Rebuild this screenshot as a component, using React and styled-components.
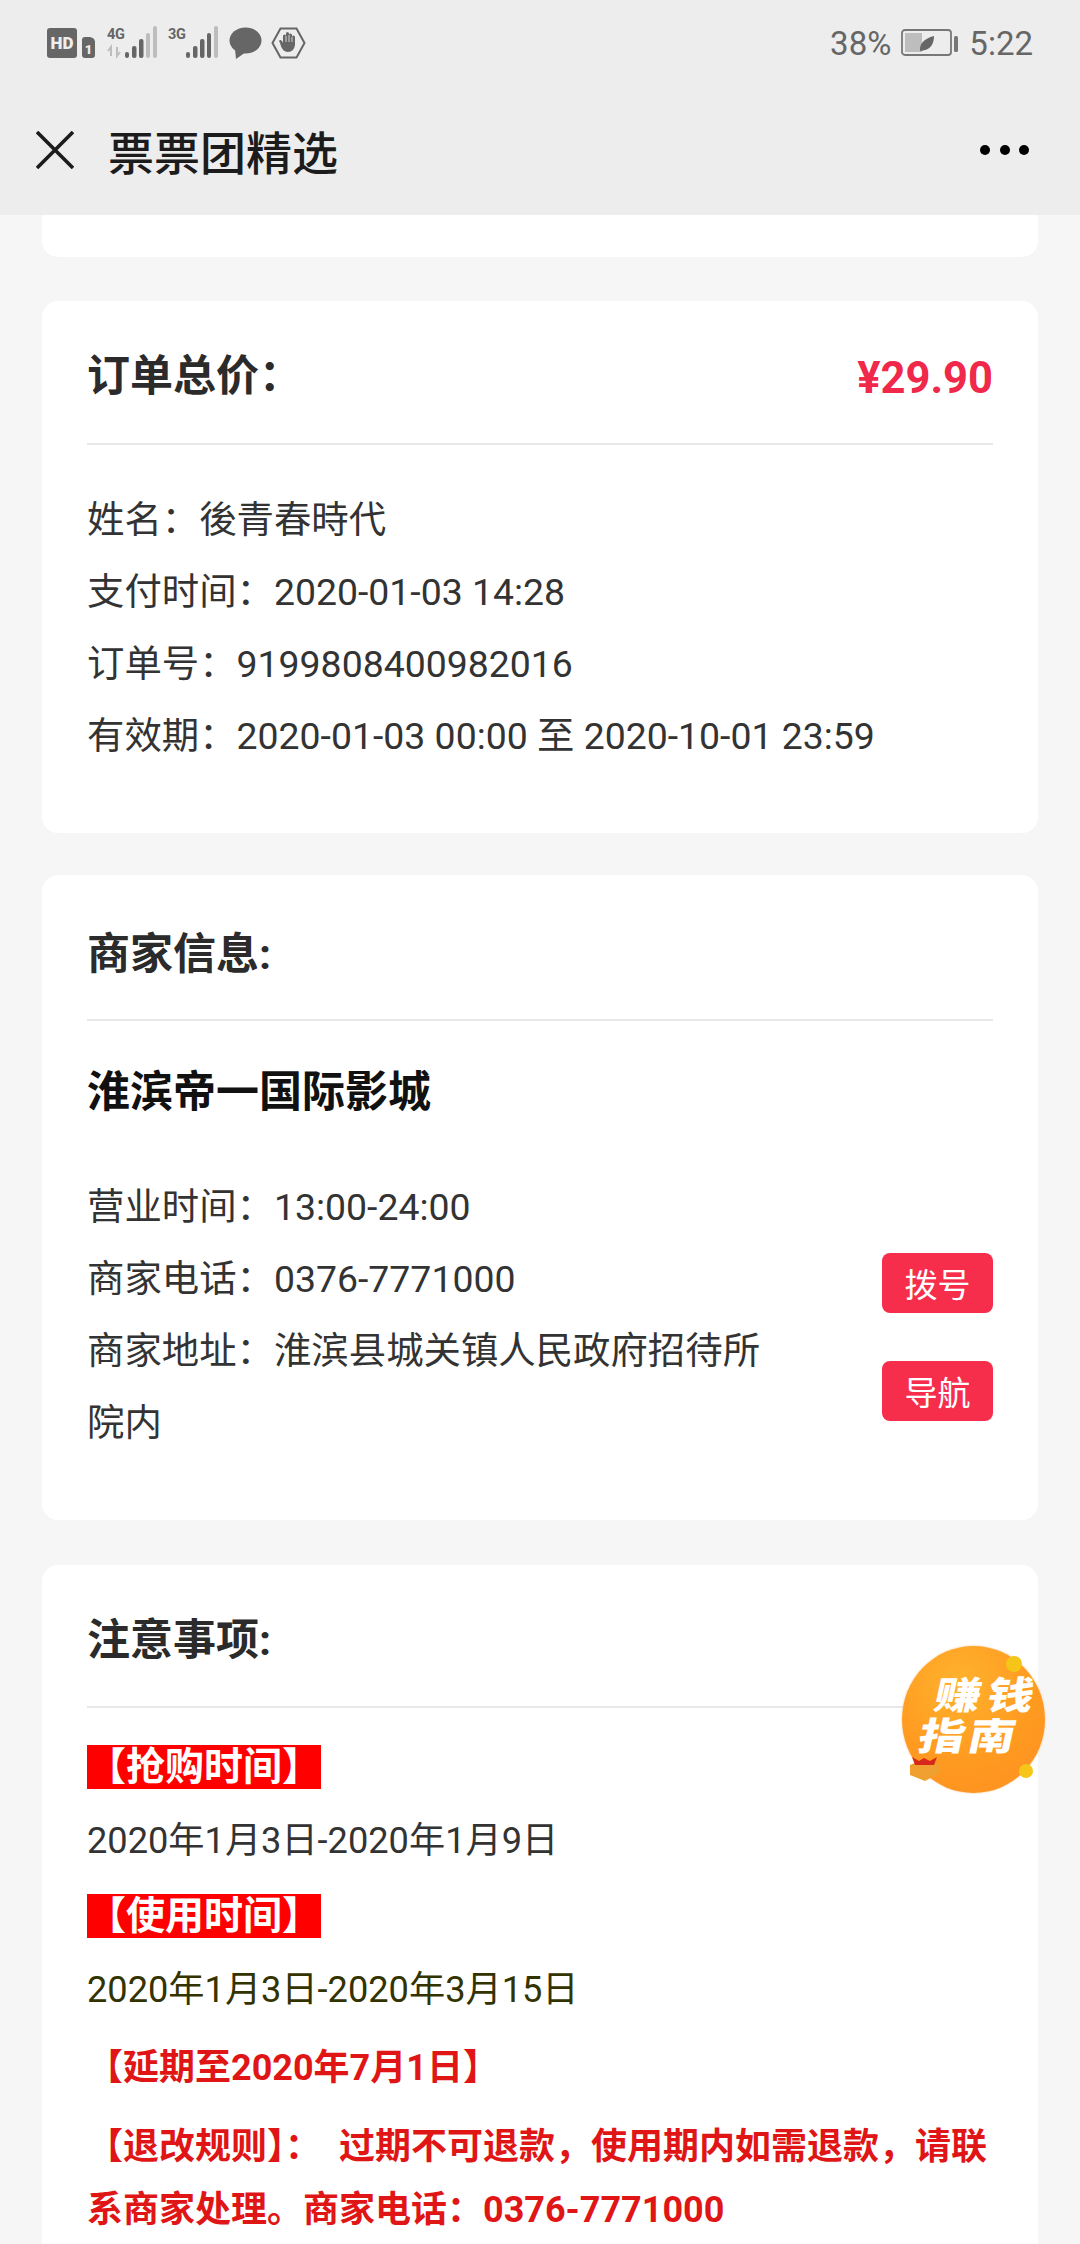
import React from 'react';
import styled, { createGlobalStyle } from 'styled-components';

const Global = createGlobalStyle`
  html, body { margin: 0; padding: 0; background: #f6f6f6; }
  body { font-family: Roboto, "Noto Sans CJK SC", sans-serif; }
  #root { height: 2244px; overflow: hidden; }
`;
const Page = styled.div`
  position: relative;
  width: 1080px;
  height: 2244px;
  overflow: hidden;
  background: #f6f6f6;
`;
const Header = styled.header`
  height: 215px;
  background: #ededed;
  display: flex;
  flex-direction: column;
`;
const StatusBar = styled.div`
  height: 86px;
  display: flex;
  align-items: center;
  justify-content: space-between;
  padding: 0 47px 0 47px;
  color: #666;
  font-size: 33px;
`;
const StatusGroup = styled.div`
  display: flex;
  align-items: center;
  gap: ${p => p.$gap || 8}px;
`;
const Nav = styled.div`
  flex: 1;
  display: flex;
  align-items: center;
  padding: 0 0 1px 36px;
`;
const NavTitle = styled.div`
  margin-left: 34px;
  font-size: 46px;
  font-weight: 500;
  color: #1c1c1c;
  flex: 1;
`;
const Dots = styled.div`
  display: flex;
  gap: 9.5px;
  margin-right: 51px;
  span { width: 10px; height: 10px; border-radius: 50%; background: #000; }
`;
const Content = styled.main`
  display: flex;
  flex-direction: column;
  padding: 0 42px;
`;
const Card = styled.section`
  background: #fff;
  border-radius: 16px;
  margin-top: ${p => p.$mt || 0}px;
  padding: 0 45px ${p => p.$pb ?? 60}px;
  ${p => p.$stub && 'border-top-left-radius: 0; border-top-right-radius: 0; height: 42px; padding: 0;'}
`;
const CardHead = styled.div`
  height: ${p => p.$h}px;
  box-sizing: border-box;
  padding-top: ${p => p.$pt || 0}px;
  display: flex;
  align-items: center;
  justify-content: space-between;
  border-bottom: 2px solid #e8e8e8;
`;
const CardTitle = styled.h2`
  margin: 0;
  font-size: 43px;
  font-weight: 700;
  color: #2b2b2b;
`;
const Price = styled.div`
  margin-top: 12px;
  font-size: 43.5px;
  font-weight: 700;
  color: #f0284a;
`;
const Rows = styled.div`
  margin-top: ${p => p.$mt}px;
`;
const Row = styled.div`
  display: flex;
  justify-content: space-between;
  align-items: center;
  font-size: 37.4px;
  line-height: 72px;
  color: #333;
`;
const Address = styled.div`
  width: 690px;
`;
const ShopName = styled.h3`
  margin: 41px 0 0;
  font-size: 43px;
  line-height: 60px;
  font-weight: 700;
  color: #111;
`;
const ActionButton = styled.button`
  width: 111px;
  height: 60px;
  margin-top: 8px;
  border: 0;
  border-radius: 8px;
  background: #f72d4c;
  color: #fff;
  font: 400 33px Roboto, "Noto Sans CJK SC", sans-serif;
  padding: 0;
`;
const Notes = styled.div`
  padding-top: 37px;
`;
const RedTag = styled.div`
  width: 234px;
  height: 44px;
  background: #ff0000;
  color: #fff;
  font-size: 39px;
  line-height: 44px;
  font-weight: 700;
  white-space: nowrap;
`;
const DateLine = styled.div`
  margin: 28px 0 29px;
  font-size: 36.2px;
  line-height: 48px;
  font-weight: 400;
  color: ${p => p.$color || '#333'};
`;
const Alert = styled.p`
  margin: ${p => p.$mt}px 0 0;
  font-size: 36px;
  line-height: 63px;
  font-weight: 700;
  color: #e01515;
`;
const Badge = styled.div`
  position: absolute;
  left: 902px;
  top: 1646px;
  width: 143px;
  height: 147px;
  border-radius: 50%;
  background: radial-gradient(circle at 40% 25%, #ffb22e 0%, #ff9a20 55%, #fd8f22 100%);
  box-shadow: 0 0 2px #ffb777;
`;
const BadgeText = styled.div`
  position: absolute;
  left: ${p => p.$x}px;
  top: ${p => p.$y}px;
  font-size: 38px;
  line-height: 42px;
  font-weight: 900;
  letter-spacing: ${p => p.$ls || 0}px;
  color: #fff;
  white-space: nowrap;
  transform-origin: left center;
  transform: scaleX(1.22) skewX(-10deg);
`;
const BadgeDecor = styled.svg`
  position: absolute;
  left: -8px;
  top: -16px;
  overflow: visible;
`;

const HdIcon = () => (
  <svg width="51" height="32" viewBox="0 0 51 32">
    <rect x="0" y="1" width="30" height="30" rx="3" fill="#666" />
    <text x="15" y="22" textAnchor="middle" fontFamily="Roboto, sans-serif" fontSize="17" fontWeight="900" fill="#eee">HD</text>
    <path d="M35 13q0-3 3-3h5q5 1 5 5v13q0 3-3 3h-7q-3 0-3-3z" fill="#666" />
    <text x="41.5" y="27" textAnchor="middle" fontFamily="Roboto, sans-serif" fontSize="13" fontWeight="900" fill="#eee">1</text>
  </svg>
);
const Signal = ({ label, arrows, full }) => (
  <svg width="52" height="34" viewBox="0 0 52 34">
    <text x="0" y="13" fontFamily="Roboto, sans-serif" fontSize="14.5" fontWeight="700" fill="#666" textLength="18">{label}</text>
    {arrows && <path d="M4 30V21l-3 4M10 21v9l3-4" fill="none" stroke="#bdbdbd" strokeWidth="2" />}
    <rect x="18" y="26" width="4" height="6" rx="2" fill="#666" />
    <rect x="25" y="20" width="4.5" height="12" rx="2" fill="#666" />
    <rect x="32" y="13" width="4.5" height="19" rx="2" fill="#666" />
    <rect x="39" y="7" width="4" height="25" rx="2" fill={full ? '#666' : '#bdbdbd'} />
    <rect x="46" y="0" width="4" height="32" rx="2" fill="#bdbdbd" />
  </svg>
);
const Bubble = () => (
  <svg width="33" height="32" viewBox="0 0 33 32">
    <ellipse cx="16.5" cy="13.5" rx="16" ry="13" fill="#666" />
    <path d="M6 22l1 10 10-7z" fill="#666" />
  </svg>
);
const StopHand = () => (
  <svg width="35" height="32" viewBox="0 0 35 32">
    <path d="M1.5 16 9.5 1.5h16l8 14.5-8 14.5h-16z" fill="none" stroke="#666" strokeWidth="2" />
    <path d="M9 16l-1-2q1-2 3 0l1 2V9q0-1.5 1.5-1.5T15 9V6.500q0-1.500 1.500-1.500T18 6.500V8q0-1.500 1.500-1.500T21 8v2q0-1.500 1.500-1.500T24 10v8q-1 7-7 7t-8-9z" fill="#666" />
    <path d="M15 9v6M18 8v7M21 10v5" stroke="#ededed" strokeWidth=".8" fill="none" />
  </svg>
);
const Battery = () => (
  <svg width="58" height="28" viewBox="0 0 58 28">
    <rect x="1" y="1" width="49" height="25" rx="3" fill="none" stroke="#777" strokeWidth="1.8" />
    <rect x="4" y="4" width="17" height="19" fill="#bdbdbd" />
    <path d="M19 22q-1-11 14-15q0 14-14 15z" fill="#666" />
    <rect x="53" y="7" width="4" height="16" rx="1.500" fill="#777" />
  </svg>
);
const CloseIcon = () => (
  <svg width="38" height="38" viewBox="0 0 38 38">
    <path d="M1 1l36 36M37 1L1 37" stroke="#1c1c1c" strokeWidth="3.6" fill="none" />
  </svg>
);

export default function App() {
  return (
    <Page>
      <Global />
      <Header>
        <StatusBar>
          <StatusGroup $gap={9}>
            <HdIcon />
            <Signal label="4G" arrows />
            <Signal label="3G" full />
            <Bubble />
            <StopHand />
          </StatusGroup>
          <StatusGroup $gap={10}>
            <span>38%</span>
            <Battery />
            <span>5:22</span>
          </StatusGroup>
        </StatusBar>
        <Nav>
          <CloseIcon />
          <NavTitle>票票团精选</NavTitle>
          <Dots><span /><span /><span /></Dots>
        </Nav>
      </Header>
      <Content>
        <Card $stub />
        <Card $mt={44} $pb={61}>
          <CardHead $h={144}>
            <CardTitle>订单总价：</CardTitle>
            <Price>¥29.90</Price>
          </CardHead>
          <Rows $mt={39}>
            <Row>姓名：後青春時代</Row>
            <Row>支付时间：2020-01-03 14:28</Row>
            <Row>订单号：9199808400982016</Row>
            <Row>有效期：2020-01-03 00:00 至 2020-10-01 23:59</Row>
          </Rows>
        </Card>
        <Card $mt={42} $pb={61}>
          <CardHead $h={146} $pt={5}>
            <CardTitle>商家信息:</CardTitle>
          </CardHead>
          <ShopName>淮滨帝一国际影城</ShopName>
          <Rows $mt={49}>
            <Row>营业时间：13:00-24:00</Row>
            <Row>
              <span>商家电话：0376-7771000</span>
              <ActionButton>拨号</ActionButton>
            </Row>
            <Row>
              <Address>商家地址：淮滨县城关镇人民政府招待所院内</Address>
              <ActionButton>导航</ActionButton>
            </Row>
          </Rows>
        </Card>
        <Card $mt={45}>
          <CardHead $h={143}>
            <CardTitle>注意事项:</CardTitle>
          </CardHead>
          <Notes>
            <RedTag>【抢购时间】</RedTag>
            <DateLine>2020年1月3日-2020年1月9日</DateLine>
            <RedTag>【使用时间】</RedTag>
            <DateLine $color="#333300">2020年1月3日-2020年3月15日</DateLine>
            <Alert $mt={-6}>【延期至2020年7月1日】</Alert>
            <Alert $mt={16}>{'【退改规则】：\u00a0 过期不可退款，使用期内如需退款，请联系商家处理。商家电话：0376-7771000'}</Alert>
          </Notes>
        </Card>
      </Content>
      <Badge>
        <BadgeText $x={33} $y={29} $ls={5}>赚钱</BadgeText>
        <BadgeText $x={17} $y={70} $ls={3}>指南</BadgeText>
        <BadgeDecor width="160" height="180" viewBox="0 0 160 180">
          <circle cx="120" cy="34" r="8" fill="#f5c518" />
          <circle cx="132" cy="141" r="7" fill="#f5c518" />
          <path d="M16 135l14-6 16 6v8l-15 8-15-6z" fill="#f0a030" />
          <path d="M18 127l7 4 5-3 6 3 7-4-3 8H21z" fill="#d8281c" />
        </BadgeDecor>
      </Badge>
    </Page>
  );
}
